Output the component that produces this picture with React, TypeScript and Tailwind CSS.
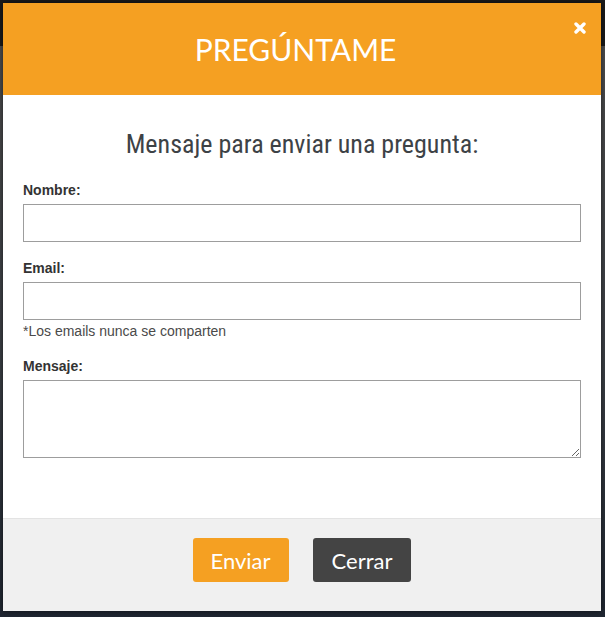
import React from "react";

function CloseIcon() {
  return (
    <svg width="12" height="12" viewBox="0 0 12 12" aria-hidden="true">
      <path d="M2 2 L10 10 M10 2 L2 10" stroke="#fff" strokeWidth="3.4" strokeLinecap="round" />
    </svg>
  );
}

export default function App() {
  return (
    <div className="h-[617px] w-[605px] overflow-hidden bg-[linear-gradient(to_bottom,#1b1b1b_0px,#1b1b1b_46px,#4d4d4d_46px,#3b3f45_60%,#1f2631_100%)] pt-[3px] pl-[3px]">
      <div className="flex w-[598px] flex-col bg-white shadow-[0_0_6px_rgba(0,0,0,0.6)]">
        {/* Header */}
        <div className="relative flex h-[92px] items-center justify-center bg-[#f5a022] pr-[13px]">
          <h1 className="font-['Lato','Noto_Sans',sans-serif] text-[30px] font-normal leading-none text-white">
            PREGÚNTAME
          </h1>
          <button className="absolute right-[15px] top-[19px] flex h-[12px] w-[12px] items-center justify-center">
            <CloseIcon />
          </button>
        </div>

        {/* Body */}
        <div className="flex flex-col px-5 pt-[34px] pb-[60px] font-['Liberation_Sans',Arial,sans-serif]">
          <h2 className="mb-[21px] text-center font-['Roboto_Condensed','Liberation_Sans_Narrow',sans-serif] text-[26px] leading-[30px] text-[#3d4246]">
            Mensaje para enviar una pregunta:
          </h2>

          <label className="mb-1 text-[14px] font-bold leading-5 text-[#333]">Nombre:</label>
          <input type="text" className="h-[38px] w-full border border-[#9d9d9d] bg-white px-2 outline-none" />

          <label className="mt-4 mb-1 text-[14px] font-bold leading-5 text-[#333]">Email:</label>
          <input type="email" className="h-[38px] w-full border border-[#9d9d9d] bg-white px-2 outline-none" />
          <p className="mt-[2px] text-[14px] leading-[18px] text-[#4a4a4a]">*Los emails nunca se comparten</p>

          <label className="mt-[16px] mb-1 text-[14px] font-bold leading-5 text-[#333]">Mensaje:</label>
          <textarea className="block h-[78px] w-full border border-[#9d9d9d] bg-white px-2 outline-none" />
        </div>

        {/* Footer */}
        <div className="flex h-[93px] items-start justify-center gap-6 border-t border-[#e3e3e3] bg-[#f0f0f0] pt-[19px] font-['Lato','Noto_Sans',sans-serif]">
          <button className="h-[44px] rounded-[3px] bg-[#f5a022] px-[18px] text-[22px] text-white">Enviar</button>
          <button className="h-[44px] rounded-[3px] bg-[#444444] px-[19px] text-[22px] text-white">Cerrar</button>
        </div>
      </div>
    </div>
  );
}
